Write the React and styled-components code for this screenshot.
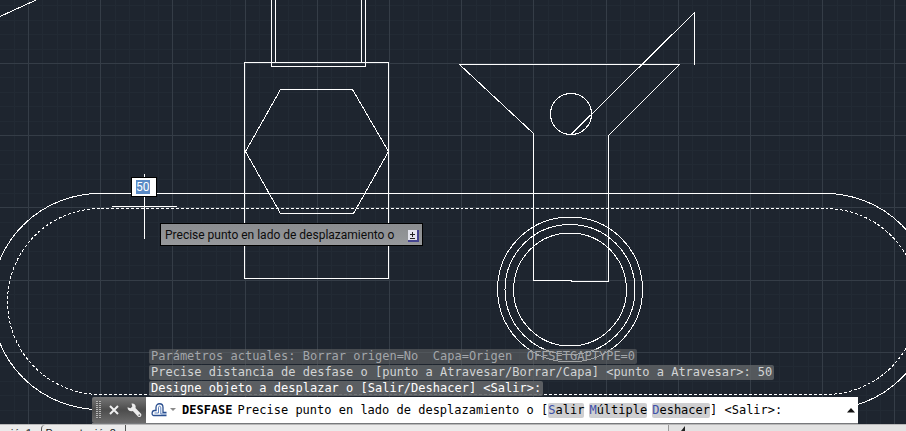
import { useEffect, useRef } from 'react';
import styled, { createGlobalStyle } from 'styled-components';

const uiFont = 'Roboto, "Open Sans", sans-serif';
const monoFont = '"DejaVu Sans Mono", "Liberation Mono", monospace';

const MAJOR_STEP = 72.2;
const gridLines = Array.from({ length: 180 }, (_, i) => ({
  offset: (i - 5) * (MAJOR_STEP / 5),
  major: i % 5 === 0,
}));

const history = [
  {
    text: 'Parámetros actuales: Borrar origen=No  Capa=Origen  OFFSETGAPTYPE=0',
    color: '#a3a6aa',
    background: 'rgba(98, 101, 104, 0.6)',
  },
  {
    text: 'Precise distancia de desfase o [punto a Atravesar/Borrar/Capa] <punto a Atravesar>: 50',
    color: '#d2d4d5',
    background: 'rgba(98, 101, 104, 0.8)',
  },
  {
    text: 'Designe objeto a desplazar o [Salir/Deshacer] <Salir>:',
    color: '#ffffff',
    background: 'rgba(98, 101, 104, 0.9)',
  },
];

const options = ['Salir', 'Múltiple', 'Deshacer'];

const Grid = () => (
  <g shapeRendering="crispEdges">
    {[false, true].map((major) =>
      gridLines
        .filter((line) => line.major === major)
        .map(({ offset }) => {
          const x = Math.round(28 + offset);
          const y = Math.round(63 + offset);
          return (
            <g key={offset} fill={major ? '#353d47' : '#222a34'}>
              <rect x={x} y="0" width="1" height="100%" />
              <rect x="0" y={y} width="100%" height="1" />
            </g>
          );
        })
    )}
  </g>
);

const Drawing = () => (
  <DrawingSvg aria-hidden="true">
    <Grid />
    <g fill="none" stroke="#fff" strokeWidth="1" shapeRendering="crispEdges">
      <path d="M0 16.5L36 0" />
      {/* piezas de la izquierda */}
      <path d="M271.5 0V66.5H365.5V0M275.5 0V62.5M361.5 0V62.5" />
      <path d="M244.5 62.5H388.5V278.5H244.5Z" />
      <path d="M245.5 151.5L280.5 89.5H352.5L388.5 151.5L353.5 213.5H280.5Z" />
      {/* embudo */}
      <path d="M533.5 280.5V133.5L459.5 64.5H679.5L608.5 135.5V281.5H571.5V280.5Z" />
      <path d="M571 134.5L694.5 12.5V64.5" />
      <circle cx="571" cy="114" r="20.5" />
      <circle cx="570" cy="289.5" r="72.5" />
      <circle cx="570" cy="289.5" r="65" />
      <circle cx="570" cy="289.5" r="56.5" />
      {/* ranura y su desfase */}
      <rect x="-8.5" y="193.5" width="942" height="216" rx="108" />
      <rect x="7.5" y="208.5" width="911" height="186" rx="93" strokeDasharray="3 2" />
      {/* cursor */}
      <path d="M144.5 174V239M112 206.5H177" />
    </g>
  </DrawingSvg>
);

const OffsetIcon = () => (
  <svg width="16" height="14" viewBox="0 0 16 14" fill="none" aria-hidden="true">
    <path
      d="M2.500 12.5H15.500M2.500 12.5C.5 12.500 .5 7.500 3.5 7.5H5V4.500C5 -.5 12 -.5 12 4.500V9.500H15.500"
      stroke="#2b4f8f"
      strokeWidth="1.300"
    />
    <path d="M3.500 10H7.500V5C7.500 2.500 9.800 2.500 9.800 5V11H15.500" stroke="#5f82bd" />
  </svg>
);

const WrenchIcon = () => (
  <svg width="15" height="15" viewBox="0 0 15 15" aria-hidden="true">
    <path
      d="M.5 4.200L3.500 5.300L5.300 3.600L4.500 .6C7.500 0 9.300 2.500 8.500 5L14 10.800C15.300 12.500 13 15 11.200 13.700L5.800 8C3.200 9 .5 7.200 .5 4.200Z"
      fill="#ececec"
    />
    <circle cx="12.300" cy="12.200" r=".9" fill="#777" />
  </svg>
);

const App = () => {
  const distanceRef = useRef(null);

  useEffect(() => {
    distanceRef.current.focus();
    distanceRef.current.select();
  }, []);

  return (
    <>
      <GlobalStyle />
      <Page>
        <Canvas>
          <Drawing />
          <DistanceInput ref={distanceRef} aria-label="Distancia" defaultValue="50" />
          <Prompt>
            Precise punto en lado de desplazamiento o
            <PromptButton aria-label="Opciones">
              <svg width="11" height="12" viewBox="0 0 11 12" aria-hidden="true">
                <path d="M0 0H11V12H0Z" fill="#e4e4ee" />
                <path d="M10 0V11H0" fill="none" stroke="#45458f" strokeWidth="2" />
                <path d="M4 2h1v2h2v1H5v2H4V5H2V4h2zM2 8h5v1H2z" fill="#222" />
              </svg>
            </PromptButton>
          </Prompt>
          <CommandPanel>
            <History>
              {history.map((line) => (
                <HistoryLine key={line.text} $color={line.color} $background={line.background}>
                  {line.text}
                </HistoryLine>
              ))}
            </History>
            <CommandBar>
              <Handle>
                <Grip />
                <IconButton aria-label="Cerrar">
                  <svg width="10" height="10" viewBox="0 0 10 10" aria-hidden="true">
                    <path d="M1 1L9 9M9 1L1 9" stroke="#f0f0f0" strokeWidth="2" />
                  </svg>
                </IconButton>
                <IconButton aria-label="Personalizar">
                  <WrenchIcon />
                </IconButton>
              </Handle>
              <CommandLine>
                <IconButton aria-label="Comandos recientes">
                  <OffsetIcon />
                  <svg width="6" height="4" viewBox="0 0 6 4" aria-hidden="true">
                    <path d="M0 0H6L3 3Z" fill="#8a8a8a" />
                  </svg>
                </IconButton>
                <CommandName>DESFASE</CommandName>
                <CommandText>
                  Precise punto en lado de desplazamiento o [
                  {options.map((option) => (
                    <Option key={option}>
                      <Shortcut>{option[0]}</Shortcut>
                      {option.slice(1)}
                    </Option>
                  ))}
                  ] &lt;Salir&gt;:
                </CommandText>
                <ExpandButton aria-label="Mostrar historial">
                  <svg width="8" height="5" viewBox="0 0 8 5" aria-hidden="true">
                    <path d="M0 4.500H8L4 0Z" fill="#111" />
                  </svg>
                </ExpandButton>
              </CommandLine>
            </CommandBar>
          </CommandPanel>
        </Canvas>
        <LayoutTabs>
          <Tab href="#presentacion1" $width={41}>
            Presentación1
          </Tab>
          <Tab href="#presentacion2" $width={85}>
            Presentación2
          </Tab>
          <Scroller>
            <svg width="6" height="6" viewBox="0 0 6 6" aria-hidden="true">
              <path d="M6 1V6H2Z" fill="#222" />
            </svg>
          </Scroller>
        </LayoutTabs>
      </Page>
    </>
  );
};

export default App;

const GlobalStyle = createGlobalStyle`
  * {
    box-sizing: border-box;
  }

  body {
    margin: 0;
    background-color: #1e252f;
  }

  button {
    display: flex;
    align-items: center;
    padding: 0;
    border: 0;
    background: none;
    font: inherit;
    color: inherit;
    cursor: pointer;
  }
`;

const Page = styled.div`
  height: 100vh;
  display: flex;
  flex-direction: column;
  overflow: hidden;
`;

const Canvas = styled.main`
  flex: 1;
  position: relative;
  overflow: hidden;
  background-color: #1e252f;
`;

const DrawingSvg = styled.svg`
  display: block;
  width: 100%;
  height: 100%;
`;

const DistanceInput = styled.input`
  position: absolute;
  left: 131px;
  top: 177px;
  width: 26px;
  height: 20px;
  padding: 0 4px;
  border: 1px solid #000;
  outline: none;
  border-radius: 0;
  background-color: #fff;
  font: 12px/14px ${uiFont};
  color: #222;

  &::selection {
    background-color: #5a8ac6;
    color: #fff;
  }
`;

const Prompt = styled.div`
  position: absolute;
  left: 160px;
  top: 223px;
  height: 23px;
  display: flex;
  align-items: center;
  gap: 14px;
  padding: 0 3px 0 4px;
  border: 1px solid #000;
  background: linear-gradient(#8a8c8f, #97999c);
  font: 12px/16px ${uiFont};
  color: #0c0c0c;
  white-space: nowrap;
`;

const PromptButton = styled.button`
  margin-top: 2px;
`;

const CommandPanel = styled.section`
  position: absolute;
  left: 92px;
  right: 48px;
  bottom: 0;
  display: flex;
  flex-direction: column;
  gap: 1px;
  font: 12px/15px ${monoFont};
`;

const History = styled.div`
  display: flex;
  flex-direction: column;
  align-items: flex-start;
  gap: 1px;
  padding-left: 57px;
`;

const HistoryLine = styled.div`
  padding: 0 2px;
  border-radius: 2px;
  background-color: ${({ $background }) => $background};
  color: ${({ $color }) => $color};
  white-space: pre;
`;

const CommandBar = styled.div`
  height: 27px;
  display: flex;
  border-bottom: 1px solid #77797c;
`;

const Handle = styled.div`
  width: 54px;
  display: flex;
  align-items: center;
  justify-content: space-between;
  padding: 0 4px;
  border-radius: 2px 0 0 2px;
  background: linear-gradient(#777 0, #4c4c4c 50%, #6c6c6c);
`;

const Grip = styled.span`
  width: 5px;
  height: 18px;
  background: repeating-linear-gradient(#0000 0 1px, #5a5a5a 1px 2px),
    repeating-linear-gradient(90deg, #b4b4b4 0 2px, #5a5a5a 2px 3px);
`;

const IconButton = styled.button`
  gap: 3px;
`;

const CommandLine = styled.div`
  flex: 1;
  min-width: 0;
  display: flex;
  align-items: center;
  gap: 5px;
  padding: 0 3px 0 5px;
  background-color: #fff;
  color: #000;
`;

const CommandName = styled.strong`
  margin-left: 1px;
`;

const CommandText = styled.div`
  display: flex;
  white-space: pre;
`;

const Option = styled.button`
  border-radius: 2px;
  background-color: #cfcfd1;

  & + & {
    margin-left: 5px;
  }
`;

const Shortcut = styled.span`
  color: #3d4fa8;
`;

const ExpandButton = styled.button`
  margin-left: auto;
`;

const LayoutTabs = styled.nav`
  flex: none;
  height: 7px;
  display: flex;
  overflow: hidden;
  border-top: 1px solid #b9b9b9;
  background-color: #ebebeb;
  font: 11px/18px ${uiFont};
`;

const Tab = styled.a`
  width: ${({ $width }) => $width}px;
  height: 18px;
  display: flex;
  justify-content: flex-end;
  padding-right: 9px;
  white-space: nowrap;
  border-left: 1px solid #555;
  border-top-left-radius: 4px;
  color: #222;
  text-decoration: none;

  &:first-child {
    border-left: 0;
  }

  &:nth-child(2) {
    border-right: 1px solid #555;
  }
`;

const Scroller = styled.div`
  width: 238px;
  margin-left: auto;
  padding-left: 10px;
  border-left: 1px solid #999;
  background-color: #e2e2e2;
  line-height: 0;
`;
